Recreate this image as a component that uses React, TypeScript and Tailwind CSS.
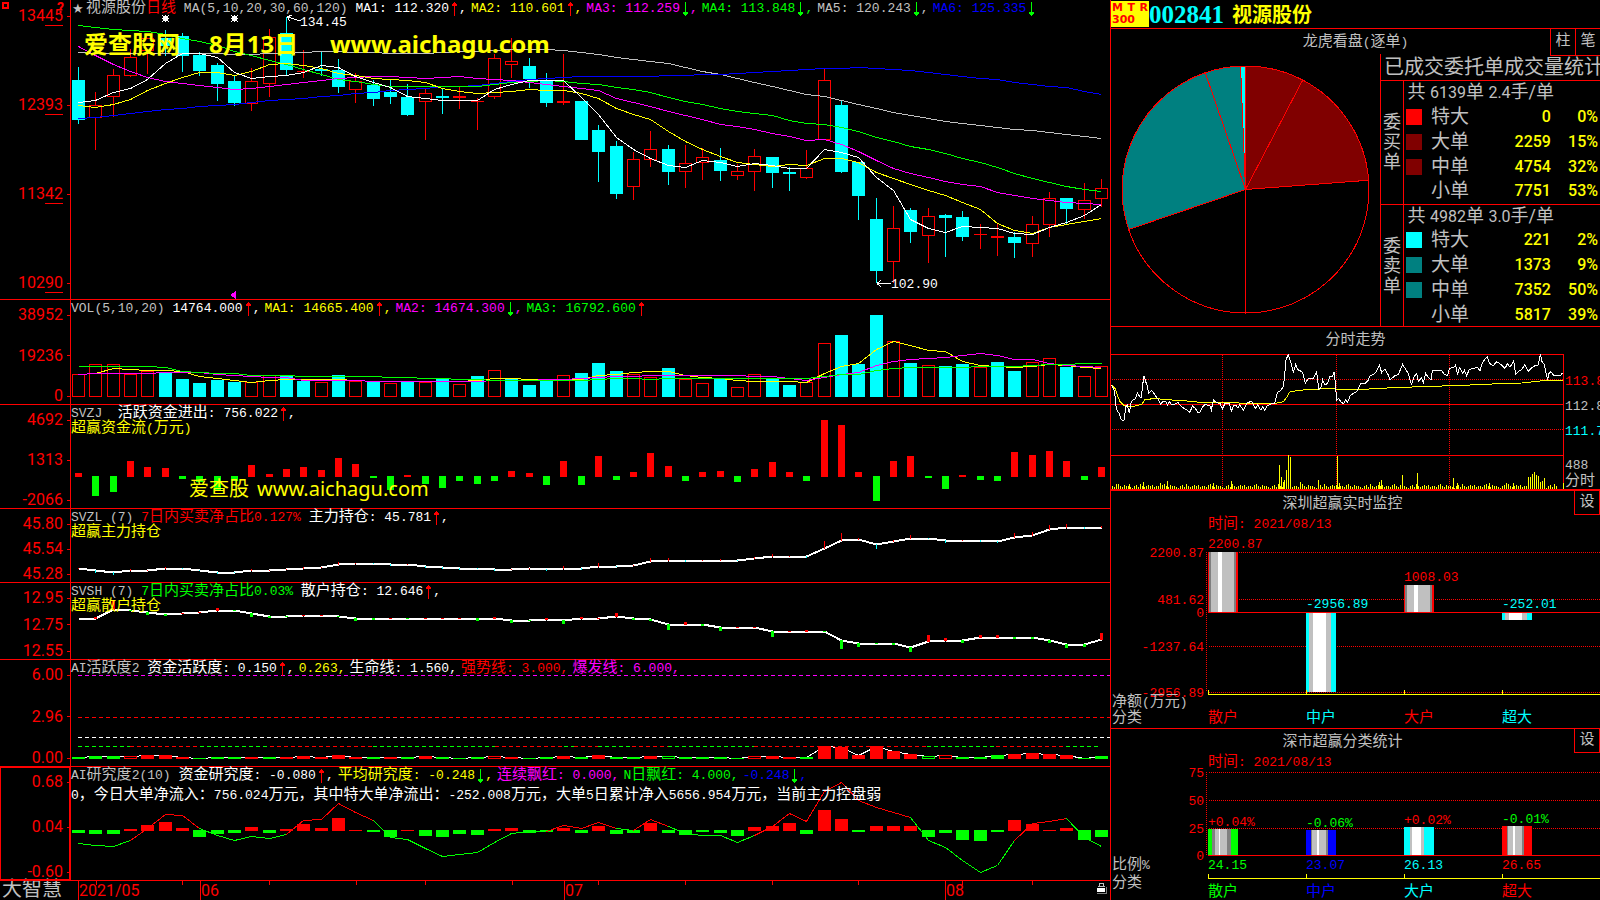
import type { ReactNode } from 'react';

type Tone = 'white' | 'yellow' | 'magenta' | 'green' | 'gray' | 'blue' | 'red' | 'cyan';

const TEXT: Record<Tone, string> = {
    white: 'text-white',
    yellow: 'text-[#ffff00]',
    magenta: 'text-[#ff00ff]',
    green: 'text-[#00ff00]',
    gray: 'text-[#c0c0c0]',
    blue: 'text-[#0000ff]',
    red: 'text-[#ff0000]',
    cyan: 'text-[#00ffff]',
};

const HEX: Record<Tone, string> = {
    white: '#ffffff',
    yellow: '#ffff00',
    magenta: '#ff00ff',
    green: '#00ff00',
    gray: '#c0c0c0',
    blue: '#0000ff',
    red: '#ff0000',
    cyan: '#00ffff',
};

// Chart data. Everything is in chart units, one slot per trading day.
const DAYS = 60;
const PLOT_W = 1039;
const cx = (i: number) => Math.round(7 + (i * 1023) / (DAYS - 1));

// [rising, high, body top, body bottom, low]
const candles: [0 | 1, number, number, number, number][] = [
    [0, 67, 80, 120, 124], [1, 92, 105, 118, 150], [1, 69, 75, 97, 117], [1, 49, 57, 76, 77],
    [1, 38, 38, 51, 74], [0, 30, 38, 46, 56], [0, 33, 36, 56, 72], [0, 52, 55, 71, 76],
    [0, 63, 65, 84, 101], [0, 76, 81, 103, 106], [1, 68, 81, 104, 111], [1, 29, 37, 84, 97],
    [0, 17, 33, 70, 75], [1, 50, 71, 72, 78], [0, 51, 69, 71, 76], [0, 59, 70, 87, 93],
    [1, 73, 81, 90, 103], [0, 80, 85, 99, 106], [0, 79, 92, 97, 104], [0, 84, 97, 115, 116],
    [1, 89, 93, 102, 140], [0, 88, 96, 98, 114], [1, 87, 96, 98, 109], [1, 98, 101, 102, 130],
    [1, 54, 58, 97, 99], [1, 38, 61, 65, 78], [0, 58, 66, 79, 88], [0, 73, 80, 103, 107],
    [1, 54, 101, 103, 105], [0, 101, 101, 140, 140], [0, 125, 130, 152, 182], [0, 141, 146, 194, 199],
    [1, 152, 159, 187, 200], [1, 131, 149, 160, 167], [0, 145, 149, 172, 185], [1, 145, 163, 172, 188],
    [1, 148, 157, 163, 180], [0, 148, 160, 171, 181], [1, 164, 171, 176, 180], [1, 149, 156, 172, 191],
    [0, 157, 157, 173, 188], [0, 167, 172, 174, 191], [1, 150, 168, 178, 179], [1, 69, 80, 140, 140],
    [0, 101, 105, 172, 173], [0, 162, 162, 196, 220], [0, 198, 219, 271, 283], [1, 206, 228, 262, 283],
    [0, 208, 210, 232, 243], [1, 208, 216, 236, 263], [0, 214, 215, 218, 257], [0, 211, 217, 237, 241],
    [1, 224, 234, 235, 249], [1, 224, 236, 238, 256], [0, 232, 237, 243, 258], [1, 216, 224, 244, 257],
    [1, 192, 198, 225, 237], [0, 198, 198, 209, 224], [1, 183, 200, 210, 219], [1, 179, 188, 199, 207],
];

const ma5 = [102, 100, 92, 88, 79, 63, 53, 53, 57, 72, 78, 76, 75, 72, 65, 67, 76, 82, 87, 96, 98, 100, 100, 100, 89, 84, 80, 80, 80, 97, 114, 137, 149, 158, 165, 167, 160, 162, 166, 163, 165, 168, 168, 149, 152, 157, 177, 190, 219, 228, 232, 226, 227, 228, 233, 234, 227, 222, 215, 204];
const ma10 = [105, 107, 104, 99, 90, 83, 77, 72, 72, 75, 71, 64, 63, 65, 68, 73, 75, 78, 79, 80, 82, 88, 91, 93, 92, 91, 89, 90, 90, 93, 98, 108, 114, 119, 131, 141, 149, 156, 162, 164, 166, 164, 165, 158, 158, 162, 172, 178, 184, 190, 195, 202, 209, 223, 230, 233, 227, 224, 221, 218];
const ma20 = [46, 55, 64, 71, 77, 81, 83, 85, 87, 89, 88, 86, 84, 82, 80, 78, 77, 76, 76, 77, 78, 77, 76, 78, 79, 80, 82, 84, 86, 88, 90, 98, 102, 106, 111, 115, 119, 124, 126, 129, 133, 136, 140, 139, 144, 151, 160, 168, 173, 177, 181, 184, 186, 192, 195, 198, 200, 202, 203, 204];
const ma30 = [25, 27, 29, 30, 31, 34, 38, 41, 45, 51, 55, 60, 64, 69, 74, 79, 81, 84, 86, 86, 86, 86, 86, 86, 84, 82, 81, 80, 81, 83, 84, 87, 89, 92, 97, 101, 104, 108, 111, 113, 115, 120, 123, 124, 127, 131, 137, 141, 146, 149, 153, 158, 162, 167, 173, 178, 182, 186, 189, 191];
const ma60 = [52, 53, 53, 53, 53, 53, 53, 53, 53, 54, 54, 53, 53, 52, 51, 51, 52, 52, 53, 53, 53, 52, 51, 51, 50, 49, 49, 49, 50, 52, 54, 57, 59, 61, 63, 67, 71, 74, 78, 82, 86, 90, 94, 96, 100, 104, 108, 112, 115, 118, 121, 123, 125, 127, 129, 130, 132, 134, 136, 138];
const ma120 = [118, 117, 115, 113, 111, 109, 108, 106, 105, 104, 102, 100, 99, 98, 96, 95, 93, 92, 90, 89, 88, 86, 86, 85, 83, 81, 79, 78, 77, 76, 76, 76, 76, 76, 75, 75, 74, 74, 73, 72, 71, 70, 69, 68, 68, 67, 68, 69, 70, 72, 74, 76, 78, 79, 82, 84, 86, 87, 91, 94];

const volume = [23, 33, 33, 23, 26, 25, 18, 14, 17, 15, 15, 22, 22, 16, 15, 22, 16, 15, 14, 16, 15, 18, 13, 21, 27, 19, 12, 16, 22, 24, 34, 26, 23, 20, 29, 18, 14, 19, 10, 23, 19, 12, 15, 54, 62, 33, 82, 56, 34, 32, 31, 33, 30, 35, 26, 35, 39, 30, 21, 31];
// days whose volume bar is coloured against the candle (close vs. previous close)
const volumeFlips = [0, 13, 14, 18, 23, 25, 53];
const vol5 = [23, 24, 29, 28, 27, 27, 26, 21, 19, 17, 15, 17, 18, 18, 18, 18, 17, 16, 16, 16, 16, 16, 16, 17, 19, 19, 18, 18, 18, 18, 22, 23, 25, 26, 26, 22, 20, 19, 17, 16, 16, 16, 15, 24, 31, 34, 48, 56, 52, 47, 46, 36, 32, 31, 30, 31, 33, 32, 30, 29];
const vol10 = [23, 24, 24, 24, 24, 25, 25, 25, 23, 22, 21, 20, 20, 17, 17, 17, 17, 16, 16, 16, 16, 16, 16, 16, 17, 17, 17, 18, 18, 19, 20, 21, 21, 22, 22, 22, 22, 22, 22, 21, 21, 19, 17, 20, 23, 25, 32, 36, 38, 39, 40, 42, 44, 42, 38, 38, 34, 32, 31, 30];
const vol20 = [31, 31, 31, 31, 31, 30, 26, 25, 24, 24, 22, 22, 22, 21, 21, 21, 21, 21, 20, 20, 19, 19, 18, 18, 17, 17, 17, 17, 17, 17, 18, 19, 19, 18, 19, 19, 19, 19, 19, 19, 19, 19, 19, 21, 23, 23, 27, 29, 30, 30, 30, 30, 31, 31, 31, 32, 33, 33, 34, 34];

// signed: above zero is drawn red, below zero green
const flow = [4, -20, -16, 16, 10, 9, -3, -6, -15, -5, 12, 3, 8, 10, 7, 19, 13, -2, -14, 2, -8, -12, -5, -8, -5, 6, 4, -9, 16, -9, 21, -4, 5, 24, 11, -5, 5, 6, -6, 8, 15, 5, -5, 57, 52, 5, -25, 16, 21, -2, -13, 2, -4, -5, 25, 22, 26, 16, -4, 10];

const mainHold = [59, 61, 63, 61, 61, 59, 59, 61, 63, 63, 61, 61, 60, 59, 58, 55, 54, 54, 55, 55, 57, 58, 59, 59, 60, 60, 59, 60, 59, 59, 57, 57, 56, 52, 51, 51, 51, 51, 51, 49, 47, 47, 47, 39, 31, 30, 35, 32, 29, 29, 31, 31, 31, 32, 28, 26, 20, 18, 18, 18];
const mainTicks = [1, -3, -3, 2, 1, 2, -1, -1, -2, -1, 2, 1, 1, 2, 1, 3, 1, -1, -2, 1, -2, -2, -2, -1, -2, 1, 1, -2, 3, -2, 4, -1, 1, 4, 3, -2, 1, 2, -1, 2, 3, 1, -2, 8, 8, 2, -5, 2, 4, -1, -3, 1, -2, -2, 5, 4, 5, 4, -2, 2];
const retailHold = [35, 35, 26, 27, 29, 31, 30, 29, 27, 27, 30, 33, 33, 32, 32, 33, 35, 35, 35, 35, 35, 35, 35, 35, 35, 37, 37, 36, 37, 35, 35, 33, 35, 36, 41, 41, 41, 44, 44, 44, 48, 48, 48, 48, 57, 60, 60, 60, 64, 58, 57, 57, 54, 54, 54, 54, 57, 61, 61, 56];
const retailTicks = [0, 2, 10, -1, -3, -2, 1, 1, 3, -1, -4, -2, -1, 1, 1, -1, -3, -2, 1, -1, 1, 1, 1, -3, 2, -3, -1, 2, -4, 2, 1, 4, -2, -2, -6, 3, -2, -4, 1, 1, -6, 1, 2, -1, -9, -4, -1, -2, -5, 7, 3, -3, 3, 3, -2, -2, -3, -4, -3, 7];

const activity = [-2, -3, -3, 3, 4, 4, 2, -1, -2, -2, 2, -2, 2, 3, 2, 4, 2, -2, 2, -2, 3, -2, -1, -2, 3, 2, -1, -2, 3, -2, 4, -2, -2, 3, -3, -2, -2, -2, -1, 3, 3, 2, -2, 13, 12, 4, 13, 8, 5, -3, 4, -2, -2, -4, 5, 6, 5, 4, -1, -3];
const activityHollow = [3, 24, 34, 39, 49, 50];
// [from, to, tone] pieces of the trend line under the life line
const trend: [number, number, Tone][] = [
    [7, 59, 'green'], [59, 129, 'red'], [129, 199, 'green'], [199, 302, 'red'], [302, 424, 'green'],
    [424, 493, 'red'], [493, 503, 'green'], [503, 527, 'red'], [527, 561, 'green'], [561, 597, 'red'],
    [597, 683, 'green'], [683, 856, 'red'], [856, 925, 'green'], [925, 995, 'red'], [995, 1030, 'green'],
];

const research = [-3, -4, -4, 2, 6, 9, 3, -7, -4, -3, 4, -3, 2, 7, 3, 13, 1, -2, -7, 1, -6, -7, -4, -5, 2, 3, -3, -2, 3, -3, 5, -4, -3, 8, -3, -5, -2, -3, -6, 4, 5, 8, -4, 21, 12, -2, 5, 5, 5, -7, -3, -10, -11, -2, 11, 7, 1, 3, -10, -7];
const researchAvg = [76, 78, 79, 73, 61, 47, 48, 61, 68, 73, 69, 71, 67, 53, 52, 36, 45, 53, 70, 72, 81, 89, 87, 85, 75, 66, 64, 64, 58, 61, 55, 61, 63, 52, 59, 66, 68, 68, 75, 68, 59, 46, 54, 24, 15, 33, 40, 45, 50, 73, 80, 93, 105, 98, 73, 56, 54, 51, 70, 79];
const researchRuns: [number, number, Tone][] = [
    [0, 3, 'green'], [3, 7, 'red'], [7, 12, 'green'], [12, 17, 'red'], [17, 27, 'green'], [27, 31, 'red'],
    [31, 32, 'green'], [32, 34, 'red'], [34, 39, 'green'], [39, 48, 'red'], [48, 54, 'green'], [54, 57, 'red'],
    [57, 59, 'green'],
];

const pricePoints =
    '34,180 38,186 44,200 47,240 51,255 57,265 62,280 68,287 73,285 77,245 82,240 88,265 93,235 98,225 106,222 112,203 119,215 124,218 128,180 132,152 137,170 143,185 145,205 155,197 162,205 168,215 176,225 182,237 190,228 197,228 202,240 208,230 213,237 225,237 234,233 243,243 252,250 260,255 270,262 277,243 286,250 293,262 300,262 308,245 315,238 330,243 334,255 340,225 350,233 360,235 367,252 375,235 388,235 394,258 401,242 408,240 414,250 419,240 430,255 440,235 455,228 461,240 466,250 473,240 483,256 488,245 494,256 501,243 510,238 523,235 527,225 532,202 540,198 550,185 554,150 558,105 565,88 570,105 575,120 580,143 587,118 592,133 605,140 610,150 616,175 625,160 640,160 650,140 656,192 662,190 668,165 675,180 683,175 689,155 698,153 703,140 707,190 710,225 716,220 724,232 731,236 737,225 743,232 750,213 760,205 770,200 777,185 782,175 795,175 805,165 810,153 822,148 830,138 838,120 845,143 855,132 865,150 870,165 885,152 895,148 908,118 915,130 925,145 930,165 935,178 942,155 950,145 955,170 964,158 970,172 977,145 985,158 993,165 997,137 1025,137 1033,148 1043,152 1048,130 1060,128 1067,120 1073,150 1078,127 1088,145 1093,135 1100,152 1108,133 1120,130 1132,127 1140,138 1145,118 1155,102 1162,95 1168,115 1180,122 1190,110 1205,120 1215,130 1223,115 1230,127 1241,107 1247,148 1255,140 1265,133 1274,120 1285,138 1295,128 1305,122 1315,120 1321,88 1326,110 1333,118 1337,140 1343,165 1347,145 1353,140 1360,150 1370,152 1383,150 1388,143';
const avgPoints =
    '34,180 45,190 52,210 60,230 70,240 90,245 105,243 125,238 135,224 160,221 180,222 215,225 260,228 300,232 410,233 430,236 525,235 550,230 558,220 570,200 600,196 630,193 690,191 760,195 840,190 905,187 970,185 1055,182 1140,179 1195,176 1265,174 1330,167 1390,166';
const tickSpikes: [number, number][] = [
    [49, 14], [88, 15], [130, 20], [181, 18], [202, 24], [340, 18], [394, 24], [538, 71], [544, 35], [550, 22],
    [553, 28], [559, 58], [565, 101], [571, 95], [601, 20], [655, 26], [712, 98], [718, 18], [838, 20], [844, 26],
    [907, 41], [952, 47], [1060, 32], [1072, 18], [1168, 18], [1219, 18], [1240, 18], [1285, 35], [1291, 35],
    [1297, 44], [1303, 50], [1309, 41], [1315, 38], [1321, 20], [1327, 24], [1333, 32], [1390, 18],
];
const tickBase = [5, 2, 8, 11, 5, 2, 8, 5, 5, 2, 0, 5, 8, 2, 11, 5, 2, 5, 8, 5, 8, 2, 5];

// Latin runs keep the base mono size, Chinese runs are a notch larger.
function Mixed({ children }: { children: string }) {
    return (
        <>
        {children.split(/([\u3000-\u9fff\uff00-\uffef]+)/).map((run, i) =>
            i % 2 ? (
                <span key={i} className="text-[15px]">
                {run}
                </span>
            ) : (
                run
            ),
        )}
        </>
    );
}

function Arrow({ up }: { up: boolean }) {
    return (
        <svg width="6" height="14" viewBox="0 0 6 14" shapeRendering="crispEdges" className="mx-0.5 shrink-0">
        {up ? (
            <path d="M3 0h1v14h-1zM2 1h3v1h-3zM1 2h5v2h-5z" fill="#ff0000" />
        ) : (
            <path d="M3 0h1v14h-1zM2 12h3v1h-3zM1 10h5v2h-5z" fill="#00ff00" />
        )}
        </svg>
    );
}

interface Reading {
    text: string;
    tone: Tone;
    dir?: 'up' | 'down';
    plain?: boolean;
}

function Readings({ items }: { items: Reading[] }) {
    return (
        <div className="flex h-4 items-center whitespace-pre leading-4">
        {items.map((item) => (
            <span key={item.text} className={`flex items-center ${TEXT[item.tone]}`}>
            <span>
            <Mixed>{item.text}</Mixed>
            </span>
            {item.dir && <Arrow up={item.dir === 'up'} />}
            {!item.plain && <span className="mr-1">,</span>}
            </span>
        ))}
        </div>
    );
}

interface PanelProps {
    labels: string[];
    height: number;
    underline?: boolean;
    boxed?: boolean;
    header: ReactNode;
    children: ReactNode;
    overlay?: ReactNode;
}

function Panel({ labels, height, underline, boxed, header, children, overlay }: PanelProps) {
    return (
        <section className="relative flex min-h-0 border-b border-[#ff0000]">
        <div
        className={`flex w-[71px] shrink-0 flex-col justify-between border-r border-[#ff0000] font-[Roboto,sans-serif] text-[16px] leading-4 text-[#ff0000] ${
            underline ? 'py-2' : 'pt-[7px]'
        } ${boxed ? 'shadow-[inset_1px_1px_0_#ff0000,inset_-1px_-1px_0_#ff0000]' : ''}`}
        >
        {labels.map((label) => (
            <div key={label} className="flex items-center justify-end gap-1">
            {underline ? (
                <span>
                {label.slice(0, 3)}
                <span className="underline decoration-1 underline-offset-4">{label.slice(3)}</span>
                </span>
            ) : (
                <span>{label}</span>
            )}
            <i className="h-px w-[3px] bg-[#ff0000]" />
            </div>
        ))}
        </div>
        <div className="relative min-w-0 flex-1">
        <svg
        className="absolute inset-0 h-full w-full"
        viewBox={`0 0 ${PLOT_W} ${height}`}
        preserveAspectRatio="none"
        shapeRendering="crispEdges"
        >
        {children}
        </svg>
        <div className="relative pt-px">{header}</div>
        {overlay}
        </div>
        </section>
    );
}

function Line({ ys, tone, width = 1 }: { ys: number[]; tone: Tone; width?: number }) {
    return (
        <polyline
        points={ys.map((y, i) => `${cx(i) + 0.5},${y + 0.5}`).join(' ')}
        fill="none"
        stroke={HEX[tone]}
        strokeWidth={width}
        />
    );
}

function Candles() {
    return (
        <>
        {candles.map(([rising, high, top, bottom, low], i) => {
            const x = cx(i);
            const color = rising ? '#ff0000' : '#00ffff';
            return (
                <g key={i} fill={color}>
                <rect x={x} y={high} width="1" height={top - high} />
                <rect x={x} y={bottom} width="1" height={low - bottom} />
                {rising && bottom - top > 2 ? (
                    <rect x={x - 5.5} y={top + 0.5} width="12" height={bottom - top - 1} fill="none" stroke={color} />
                ) : (
                    <rect x={x - 6} y={top} width="13" height={Math.max(1, bottom - top)} />
                )}
                </g>
            );
        })}
        </>
    );
}

function EventMark({ x }: { x: number }) {
    return (
        <path
        transform={`translate(${x} 15)`}
        d="M1 1h5v5h-5zM3 0h1v7h-1zM0 3h7v1h-7zM0 0h1v1h-1zM6 0h1v1h-1zM0 6h1v1h-1zM6 6h1v1h-1z"
        fill="#ffffff"
        />
    );
}

function PricePanel() {
    return (
        <Panel
        labels={['13445', '12393', '11342', '10290']}
        height={299}
        underline
        header={
            <div className="flex items-center whitespace-pre pl-px">
            <span className="w-3.5 font-[DejaVu_Sans] text-[13px] leading-4 text-[#c0c0c0]">★</span>
            <Readings
            items={[
                { text: '视源股份', tone: 'gray', plain: true },
                { text: '日线 ', tone: 'red', plain: true },
                { text: 'MA(5,10,20,30,60,120) ', tone: 'gray', plain: true },
                { text: 'MA1: 112.320', tone: 'white', dir: 'up' },
                { text: 'MA2: 110.601', tone: 'yellow', dir: 'up' },
                { text: 'MA3: 112.259', tone: 'magenta', dir: 'down' },
                { text: 'MA4: 113.848', tone: 'green', dir: 'down' },
                { text: 'MA5: 120.243', tone: 'gray', dir: 'down' },
                { text: 'MA6: 125.335', tone: 'blue', dir: 'down', plain: true },
            ]}
            />
            </div>
        }
        overlay={
            <>
            <span className="absolute left-[229px] top-[15px] leading-4 text-white">134.45</span>
            <span className="absolute left-[820px] top-[277px] leading-4 text-white">102.90</span>
            <div className="absolute left-[13px] top-7 flex whitespace-pre font-['Noto_Sans','Noto_Sans_CJK_SC',sans-serif] text-[24px] font-bold leading-8 text-[#ffff00]">
            <span className="w-[125px]">爱查股网</span>
            <span className="w-[121px]">8月13日</span>
            <span>www.aichagu.com</span>
            </div>
            </>
        }
        >
        <Candles />
        <Line ys={ma60} tone="gray" />
        <Line ys={ma120} tone="blue" />
        <Line ys={ma30} tone="green" />
        <Line ys={ma20} tone="magenta" />
        <Line ys={ma10} tone="yellow" />
        <Line ys={ma5} tone="white" />
        <EventMark x={91} />
        <EventMark x={160} />
        <path d="M216.500 17l13 4M216.500 17l4 -2M216.500 17l2 4M806 283.500h14M806 283.500l4 -3M806 283.500l4 3" fill="none" stroke="#ffffff" />
        <path d="M159 295l6 -4v8z" fill="#ff00ff" />
        </Panel>
    );
}

function VolumePanel() {
    const base = 97;
    return (
        <Panel
        labels={['38952', '19236', '0']}
        height={104}
        header={
            <Readings
            items={[
                { text: 'VOL(5,10,20) ', tone: 'gray', plain: true },
                { text: '14764.000', tone: 'white', dir: 'up' },
                { text: 'MA1: 14665.400', tone: 'yellow', dir: 'up' },
                { text: 'MA2: 14674.300', tone: 'magenta', dir: 'down' },
                { text: 'MA3: 16792.600', tone: 'green', dir: 'up', plain: true },
            ]}
            />
        }
        >
        {volume.map((h, i) =>
            Boolean(candles[i][0]) !== volumeFlips.includes(i) ? (
                <rect key={i} x={cx(i) - 5.5} y={base - h + 0.5} width="12" height={h - 1} fill="none" stroke="#ff0000" />
            ) : (
                <rect key={i} x={cx(i) - 6} y={base - h} width="13" height={h} fill="#00ffff" />
            ),
        )}
        <Line ys={vol5.map((h) => base - h)} tone="yellow" />
        <Line ys={vol10.map((h) => base - h)} tone="magenta" />
        <Line ys={vol20.map((h) => base - h)} tone="green" />
        </Panel>
    );
}

function SignedBars({ values, zero, width }: { values: number[]; zero: number; width: number }) {
    return (
        <>
        {values.map((v, i) => (
            <rect
            key={i}
            x={cx(i) - (width - 1) / 2}
            y={v > 0 ? zero + 1 - v : zero}
            width={width}
            height={Math.abs(v)}
            fill={v > 0 ? '#ff0000' : '#00ff00'}
            />
        ))}
        </>
    );
}

function FlowPanel() {
    return (
        <Panel
        labels={['4692', '1313', '-2066']}
        height={103}
        header={
            <>
            <Readings
            items={[
                { text: 'SVZJ  ', tone: 'gray', plain: true },
                { text: '活跃资金进出: 756.022', tone: 'white', dir: 'up' },
            ]}
            />
            <p className="leading-[14px] text-[#ffff00]">
            <Mixed>超赢资金流(万元)</Mixed>
            </p>
            </>
        }
        overlay={
            <div className="absolute left-[118px] top-[70px] flex gap-2 whitespace-pre font-['Noto_Sans','Noto_Sans_CJK_SC',sans-serif] text-[20px] leading-7 text-[#ffff00]">
            <span>爱查股</span>
            <span>www.aichagu.com</span>
            </div>
        }
        >
        <SignedBars values={flow} zero={71} width={7} />
        </Panel>
    );
}

function HoldPanel({ name, labels, height, ratio, ratioTone, value, note, ys, ticks, downColor, tickWidth }: {
    name: string;
    labels: string[];
    height: number;
    ratio: string;
    ratioTone: Tone;
    value: string;
    note: string;
    ys: number[];
    ticks: number[];
    downColor: string;
    tickWidth: number;
}) {
    return (
        <Panel
        labels={labels}
        height={height}
        header={
            <>
            <Readings
            items={[
                { text: `${name} `, tone: 'gray', plain: true },
                { text: `${ratio} `, tone: ratioTone, plain: true },
                { text: value, tone: 'white', dir: 'up' },
            ]}
            />
            <p className="leading-[14px] text-[#ffff00]">
            <Mixed>{note}</Mixed>
            </p>
            </>
        }
        >
        <Line ys={ys} tone="white" width={2} />
        {ticks.map((t, i) => (
            <rect
            key={i}
            x={cx(i) - (tickWidth - 1) / 2}
            y={t > 0 ? ys[i] + 1 - t : ys[i]}
            width={tickWidth}
            height={Math.abs(t)}
            fill={t > 0 ? '#ff0000' : downColor}
            />
        ))}
        </Panel>
    );
}

function ActivityPanel() {
    const base = 99;
    return (
        <Panel
        labels={['6.00', '2.96', '0.00']}
        height={106}
        header={
            <Readings
            items={[
                { text: 'AI活跃度2 ', tone: 'gray', plain: true },
                { text: '资金活跃度: 0.150', tone: 'white', dir: 'up' },
                { text: '0.263', tone: 'yellow' },
                { text: '生命线: 1.560', tone: 'white' },
                { text: '强势线: 3.000', tone: 'red' },
                { text: '爆发线: 6.000', tone: 'magenta' },
            ]}
            />
        }
        >
        <path d="M7 15.500H1039" stroke="#ff00ff" strokeDasharray="4 3" />
        <path d="M7 57.500H1039" stroke="#ff0000" strokeDasharray="4 3" />
        <path d="M7 77.500H1039" stroke="#ffffff" strokeDasharray="4 3" />
        {trend.map(([from, to, tone]) => (
            <path key={from} d={`M${from} 86.500H${to}`} stroke={HEX[tone]} strokeDasharray="4 3" />
        ))}
        <Line ys={activity.map((v) => base - Math.abs(v))} tone="white" />
        {activity.map((v, i) => {
            const color = v > 0 ? '#ff0000' : '#00ff00';
            const h = Math.abs(v);
            return activityHollow.includes(i) ? (
                <rect key={i} x={cx(i) - 5.5} y={base - h + 0.5} width="12" height={h - 1} fill="#000000" stroke={color} />
            ) : (
                <rect key={i} x={cx(i) - 6} y={base - h} width="13" height={h} fill={color} />
            );
        })}
        </Panel>
    );
}

function ResearchPanel() {
    return (
        <Panel
        labels={['0.68', '0.04', '-0.60']}
        height={113}
        boxed
        header={
            <>
            <Readings
            items={[
                { text: 'AI研究度2(10) ', tone: 'gray', plain: true },
                { text: '资金研究度: -0.080', tone: 'white', dir: 'up' },
                { text: '平均研究度: -0.248', tone: 'yellow', dir: 'down' },
                { text: '连续飘红: 0.000', tone: 'magenta' },
                { text: 'N日飘红: 4.000', tone: 'green' },
                { text: '-0.248', tone: 'blue', dir: 'down' },
            ]}
            />
            <p className="mt-1 whitespace-nowrap leading-4 text-white">
            <Mixed>0，今日大单净流入：756.024万元，其中特大单净流出：-252.008万元，大单5日累计净入5656.954万元，当前主力控盘弱</Mixed>
            </p>
            </>
        }
        >
        <SignedBars values={research} zero={63} width={13} />
        {researchRuns.map(([from, to, tone]) => (
            <polyline
            key={from}
            points={researchAvg
                .slice(from, to + 1)
                .map((y, i) => `${cx(from + i) + 0.5},${y + 0.5}`)
                .join(' ')}
            fill="none"
            stroke={HEX[tone]}
            />
        ))}
        </Panel>
    );
}

function TimeAxis() {
    return (
        <footer className="flex min-h-0">
        <strong className="w-[71px] shrink-0 pl-0.5 text-[20px] font-normal leading-5 text-[#c0c0c0]">大智慧</strong>
        <div className="relative grid flex-1 grid-cols-[7fr_122fr_364fr_381fr_165fr] font-[Roboto,sans-serif] text-[16px] leading-5 text-[#ff0000]">
        <span />
        {['2021/05', '06', '07', '08'].map((label) => (
            <span key={label} className="border-l border-[#ff0000]">
            {label}
            </span>
        ))}
        <svg className="absolute inset-x-0 top-0 h-1 w-full" viewBox={`0 0 ${PLOT_W} 4`} preserveAspectRatio="none" shapeRendering="crispEdges">
        {[25, 111, 198, 285, 354, 441, 527, 614, 701, 787, 891, 961].map((x) => (
            <rect key={x} x={x} y="0" width="1" height="4" fill="#ff0000" />
        ))}
        </svg>
        <svg className="absolute right-[3px] top-px" width="11" height="12" viewBox="0 0 11 12" shapeRendering="crispEdges">
        <path d="M3.500 4v-2.500h4v2.500" fill="none" stroke="#c0c0c0" />
        <path d="M2 4.500h7" stroke="#c0c0c0" />
        <path d="M1 6h8v4h-8z" fill="#ffffff" />
        <path d="M10.500 5v6.500h-10" fill="none" stroke="#808080" />
        </svg>
        </div>
        </footer>
    );
}

const slices: [number, number, string][] = [
    [0, 27.6, '#800000'],
    [27.6, 85.7, '#800000'],
    [85.7, 180, '#000000'],
    [180, 251.1, '#000000'],
    [251.1, 341, '#008080'],
    [341, 357.7, '#008080'],
    [357.7, 360, '#00ffff'],
];

function Pie() {
    const at = (deg: number) => {
        const a = (deg * Math.PI) / 180;
        return `${134.5 + 123.5 * Math.sin(a)} ${135.5 - 123.5 * Math.cos(a)}`;
    };
    return (
        <svg viewBox="0 0 269 272" className="min-w-0 flex-1 self-start" shapeRendering="crispEdges">
        {slices.map(([from, to, fill]) => (
            <path key={from} d={`M134.500 135.500L${at(from)}A123.500 123.500 0 0 1 ${at(to)}Z`} fill={fill} stroke="#ff0000" />
        ))}
        </svg>
    );
}

const groups = [
    {
        side: '委买单',
        total: ['共', '6139', '单', '2.4', '手/单'],
        rows: [
            { name: '特大', swatch: 'bg-[#ff0000]', count: '0', share: '0%' },
            { name: '大单', swatch: 'bg-[#800000]', count: '2259', share: '15%' },
            { name: '中单', swatch: 'bg-[#800000]', count: '4754', share: '32%' },
            { name: '小单', swatch: 'bg-black', count: '7751', share: '53%' },
        ],
    },
    {
        side: '委卖单',
        total: ['共', '4982', '单', '3.0', '手/单'],
        rows: [
            { name: '特大', swatch: 'bg-[#00ffff]', count: '221', share: '2%' },
            { name: '大单', swatch: 'bg-[#008080]', count: '1373', share: '9%' },
            { name: '中单', swatch: 'bg-[#008080]', count: '7352', share: '50%' },
            { name: '小单', swatch: 'bg-black', count: '5817', share: '39%' },
        ],
    },
];

function OrderStats() {
    return (
        <div className="w-[220px] shrink-0 overflow-hidden border-l border-[#ff0000] text-[#c0c0c0]">
        <h3 className="h-[26px] whitespace-nowrap pl-[3px] font-['Noto_Sans_CJK_SC',sans-serif] text-[20px] leading-[23px]">已成交委托单成交量统计</h3>
        <table className="w-full table-fixed border-collapse font-[Roboto,'Noto_Sans_CJK_SC',sans-serif] leading-5">
        <colgroup>
        <col className="w-[22px]" />
        <col className="w-[22px]" />
        <col className="w-[52px]" />
        <col />
        <col className="w-[49px]" />
        </colgroup>
        {groups.map((group) => (
            <tbody key={group.side} className="border-t border-[#ff0000]">
            <tr>
            <th scope="rowgroup" rowSpan={5} className="border-r border-[#ff0000] p-0 pl-px text-[18px] font-normal">
            <span className="block w-5 whitespace-normal break-all">{group.side}</span>
            </th>
            <td colSpan={4} className="h-[22px] whitespace-nowrap p-0 pl-1 text-[18px] leading-[22px]">
            {group.total[0]} <span className="text-[16px]">{group.total[1]}</span>
            {group.total[2]} <span className="text-[16px]">{group.total[3]}</span>
            {group.total[4]}
            </td>
            </tr>
            {group.rows.map((row) => (
                <tr key={row.name}>
                <td className="h-[25px] p-0 pl-0.5">
                <i className={`block h-4 w-4 ${row.swatch}`} />
                </td>
                <td className="p-0 pl-1.5 text-[19px]">{row.name}</td>
                <td className="p-0 text-right text-[16px] font-medium text-[#ffff00]">{row.count}</td>
                <td className="p-0 pr-0.5 text-right text-[16px] font-medium text-[#ffff00]">{row.share}</td>
                </tr>
            ))}
            </tbody>
        ))}
        </table>
        </div>
    );
}

function OrderBook() {
    return (
        <section className="flex min-h-0 flex-col overflow-hidden border-b border-[#ff0000]">
        <div className="grid h-[25px] shrink-0 grid-cols-[50px_1fr_50px]">
        <span />
        <h2 className="text-center leading-[27px] text-[#c0c0c0]">
        <Mixed>龙虎看盘(逐单)</Mixed>
        </h2>
        <div className="flex">
        {['柱', '笔'].map((label) => (
            <button key={label} type="button" className="flex-1 border-b border-l border-[#ff0000] text-[15px] leading-5 text-[#c0c0c0]">
            {label}
            </button>
        ))}
        </div>
        </div>
        <div className="flex min-h-0 flex-1">
        <Pie />
        <OrderStats />
        </div>
        </section>
    );
}

function Intraday() {
    return (
        <section className="flex min-h-0 flex-col overflow-hidden border-b-2 border-[#ff0000]">
        <h2 className="h-[27px] shrink-0 text-center leading-[27px] text-[#c0c0c0]">
        <Mixed>分时走势</Mixed>
        </h2>
        <div className="flex min-h-0 flex-1">
        <svg viewBox="33 87 1359 405" preserveAspectRatio="none" className="h-full min-w-0 flex-1" shapeRendering="crispEdges" strokeWidth="3">
        <path d="M33 88.500H1390.500V492M33 238.500H1390M33 391.500H1390" fill="none" stroke="#ff0000" />
        <path d="M36 163.500H1390M36 313.500H1390M367.500 91V492M709.500 91V492M1048.500 91V492" fill="none" stroke="#ff0000" strokeDasharray="3 3" />
        {Array.from({ length: 223 }, (_, i) => (
            <rect key={i} x={36 + i * 6} y={489 - tickBase[i % tickBase.length]} width="3" height={3 + tickBase[i % tickBase.length]} fill="#ffff00" />
        ))}
        {tickSpikes.map(([x, h]) => (
            <rect key={x} x={x - 1} y={492 - h} width="3" height={h} fill="#ffff00" />
        ))}
        <polyline points={avgPoints} fill="none" stroke="#ffff00" />
        <polyline points={pricePoints} fill="none" stroke="#ffffff" />
        </svg>
        <div className="w-9 shrink-0 overflow-hidden pl-px pt-[15px] leading-[25px]">
        <p className="text-[#ff0000]">113.8</p>
        <p className="text-[#c0c0c0]">112.8</p>
        <p className="text-[#00ffff]">111.7</p>
        <p className="mt-3.5 leading-4 text-[#c0c0c0]">488</p>
        <p className="text-[15px] leading-4 text-[#c0c0c0]">分时</p>
        </div>
        </div>
        </section>
    );
}

interface Column {
    name: string;
    tone: Tone;
    top: number;
    height: number;
    value: string;
    valueTone: Tone;
    valueY: number;
    stripes: [number, string][];
    share?: string;
}

const S = '#c0c0c0';
const D = '#808080';
const W = '#ffffff';

const netColumns: Column[] = [
    { name: '散户', tone: 'red', top: 19, height: 60, value: '2200.87', valueTone: 'red', valueY: 10, stripes: [[1, HEX.red], [2, D], [7, S], [4, W], [12, S], [2, D], [2, HEX.red]] },
    { name: '中户', tone: 'cyan', top: 80, height: 79, value: '-2956.89', valueTone: 'cyan', valueY: 70, stripes: [[3, HEX.cyan], [4, S], [13, W], [5, S], [5, HEX.cyan]] },
    { name: '大户', tone: 'red', top: 52, height: 27, value: '1008.03', valueTone: 'red', valueY: 43, stripes: [[1, HEX.red], [2, D], [7, S], [4, W], [12, S], [2, D], [2, HEX.red]] },
    { name: '超大', tone: 'cyan', top: 80, height: 7, value: '-252.01', valueTone: 'cyan', valueY: 70, stripes: [[3, HEX.cyan], [4, S], [13, W], [5, S], [5, HEX.cyan]] },
];

const shareColumns: Column[] = [
    { name: '散户', tone: 'green', top: 58, height: 26, value: '+0.04%', valueTone: 'red', valueY: 50, share: '24.15', stripes: [[4, HEX.green], [3, D], [4, S], [1, W], [7, S], [4, D], [7, HEX.green]] },
    { name: '中户', tone: 'blue', top: 59, height: 25, value: '-0.06%', valueTone: 'green', valueY: 51, share: '23.07', stripes: [[5, HEX.blue], [1, D], [5, S], [2, W], [7, S], [2, D], [8, HEX.blue]] },
    { name: '大户', tone: 'cyan', top: 56, height: 28, value: '+0.02%', valueTone: 'red', valueY: 48, share: '26.13', stripes: [[6, HEX.cyan], [2, S], [9, W], [3, S], [10, HEX.cyan]] },
    { name: '超大', tone: 'red', top: 55, height: 29, value: '-0.01%', valueTone: 'green', valueY: 47, share: '26.65', stripes: [[5, HEX.red], [1, D], [5, S], [2, W], [7, S], [2, D], [8, HEX.red]] },
];

function StripedColumn({ column, x }: { column: Column; x: number }) {
    let left = x;
    return (
        <>
        {column.stripes.map(([width, fill], i) => {
            const at = left;
            left += width;
            return <rect key={i} x={at} y={column.top} width={width} height={column.height} fill={fill} />;
        })}
        </>
    );
}

interface ColumnPanelProps {
    title: string;
    columns: Column[];
    height: number;
    scale: [string, number][];
    zero: number;
    axis: number;
    nameY: number;
    notes: [string, number][];
}

function ColumnPanel({ title, columns, height, scale, zero, axis, nameY, notes }: ColumnPanelProps) {
    const dotted = scale.filter(([label]) => label !== '0');
    return (
        <section className="flex min-h-0 flex-col overflow-hidden border-b border-[#ff0000] last:border-b-0">
        <div className="flex h-6 shrink-0">
        <h2 className="flex-1 text-center leading-[27px] text-[#c0c0c0]">
        <Mixed>{title}</Mixed>
        </h2>
        <button type="button" className="w-[26px] border-x border-b border-[#ff0000] text-[15px] leading-5 text-[#c0c0c0]">
        设
        </button>
        </div>
        <p className="h-[18px] shrink-0 whitespace-pre pl-[97px] leading-5 text-[#ff0000]">
        <Mixed>时间: 2021/08/13</Mixed>
        </p>
        <svg viewBox={`0 0 489 ${height}`} preserveAspectRatio="xMinYMin meet" className="min-h-0 w-full flex-1 overflow-visible">
        <g shapeRendering="crispEdges" fill="none">
        <path d={`M95.500 ${dotted[0][1]}V${zero > 80 ? zero : axis - 2}`} stroke="#ff0000" strokeDasharray="1 1" />
        {dotted.map(([label, y]) => (
            <path key={label} d={`M98 ${y + 0.5}H489`} stroke="#ff0000" strokeDasharray="1 1" />
        ))}
        {columns.map((column, i) => (
            <StripedColumn key={column.name} column={column} x={97 + i * 98} />
        ))}
        <path d={`M97 ${zero + 0.5}H489`} stroke="#ff0000" />
        <path d={`M97 ${axis + 0.5}H489M97.500 ${axis - 4}v4M195.500 ${axis - 4}v4M293.500 ${axis - 4}v4M391.500 ${axis - 4}v4`} stroke="#ffff00" />
        </g>
        {scale.map(([label, y]) => (
            <text key={label} x="93" y={y + 5} textAnchor="end" fill="#ff0000">
            {label}
            </text>
        ))}
        {notes.map(([label, y]) => (
            <text key={label} x="1" y={y + 5} fill="#c0c0c0" fontSize="15">
            {label.replace(/[(%].*$/, '')}
            <tspan fontSize="13">{label.match(/[(%]/)?.[0] ?? ''}</tspan>
            {label.includes('(') && '万元'}
            {label.includes('(') && <tspan fontSize="13">)</tspan>}
            </text>
        ))}
        {columns.map((column, i) => (
            <g key={column.name}>
            <text x={97 + i * 98} y={column.valueY + 5} fill={HEX[column.valueTone]}>
            {column.value}
            </text>
            {column.share && (
                <text x={97 + i * 98} y={axis - 9} fill={HEX[column.tone]}>
                {column.share}
                </text>
            )}
            <text x={97 + i * 98} y={nameY + 5} fill={HEX[column.tone]} fontSize="15">
            {column.name}
            </text>
            </g>
        ))}
        </svg>
        </section>
    );
}

function QuoteHeader() {
    return (
        <header className="flex min-h-0 items-center border-b border-[#ff0000]">
        <div className="flex h-[26px] w-[38px] flex-col justify-center bg-[#ffff00] px-px font-['DejaVu_Sans',sans-serif] text-[11px] font-bold leading-3 text-[#ff0000]">
        <span className="flex justify-between">
        <span>M</span>
        <span>T</span>
        <span>R</span>
        </span>
        <span>300</span>
        </div>
        <strong className="pt-0.5 font-['Liberation_Serif',serif] text-[25px] leading-7 text-[#00ffff]">002841</strong>
        <h1 className="pl-2 font-['Noto_Sans_CJK_SC',sans-serif] text-[20px] font-bold leading-7 text-[#ffff00]">视源股份</h1>
        </header>
    );
}

export default function App() {
    return (
        <div className="flex h-screen overflow-hidden bg-black font-['Liberation_Mono','Noto_Sans_CJK_SC',monospace] text-[13px]">
        <main className="relative grid min-w-0 flex-1 grid-rows-[300fr_105fr_104fr_74fr_77fr_107fr_114fr_19fr]">
        <PricePanel />
        <VolumePanel />
        <FlowPanel />
        <HoldPanel
        name="SVZL (7)"
        labels={['45.80', '45.54', '45.28']}
        height={73}
        ratio="7日内买卖净占比0.127%"
        ratioTone="red"
        value="主力持仓: 45.781"
        note="超赢主力持仓"
        ys={mainHold}
        ticks={mainTicks}
        downColor="#00ffff"
        tickWidth={1}
        />
        <HoldPanel
        name="SVSH (7)"
        labels={['12.95', '12.75', '12.55']}
        height={76}
        ratio="7日内买卖净占比0.03%"
        ratioTone="green"
        value="散户持仓: 12.646"
        note="超赢散户持仓"
        ys={retailHold}
        ticks={retailTicks}
        downColor="#00ff00"
        tickWidth={3}
        />
        <ActivityPanel />
        <ResearchPanel />
        <TimeAxis />
        <i className="absolute left-0.5 top-0.5 h-[7px] w-[7px] border-2 border-[#ff0000]" />
        <span className="absolute left-[57px] top-0 font-[Roboto,sans-serif] text-[14px] font-bold leading-4 text-[#ff0000]">?</span>
        </main>
        <aside className="grid w-[490px] shrink-0 grid-rows-[29fr_298fr_164fr_238fr_171fr] border-l border-[#ff0000]">
        <QuoteHeader />
        <OrderBook />
        <Intraday />
        <ColumnPanel
        title="深圳超赢实时监控"
        columns={netColumns}
        height={195}
        scale={[['2200.87', 19], ['481.62', 66], ['0', 79], ['-1237.64', 113], ['-2956.89', 159]]}
        zero={79}
        axis={161}
        nameY={184}
        notes={[['净额(万元)', 168], ['分类', 184]]}
        />
        <ColumnPanel
        title="深市超赢分类统计"
        columns={shareColumns}
        height={129}
        scale={[['75', 1], ['50', 29], ['25', 57], ['0', 84]]}
        zero={84}
        axis={107}
        nameY={120}
        notes={[['比例%', 93], ['分类', 111]]}
        />
        </aside>
        </div>
    );
}
